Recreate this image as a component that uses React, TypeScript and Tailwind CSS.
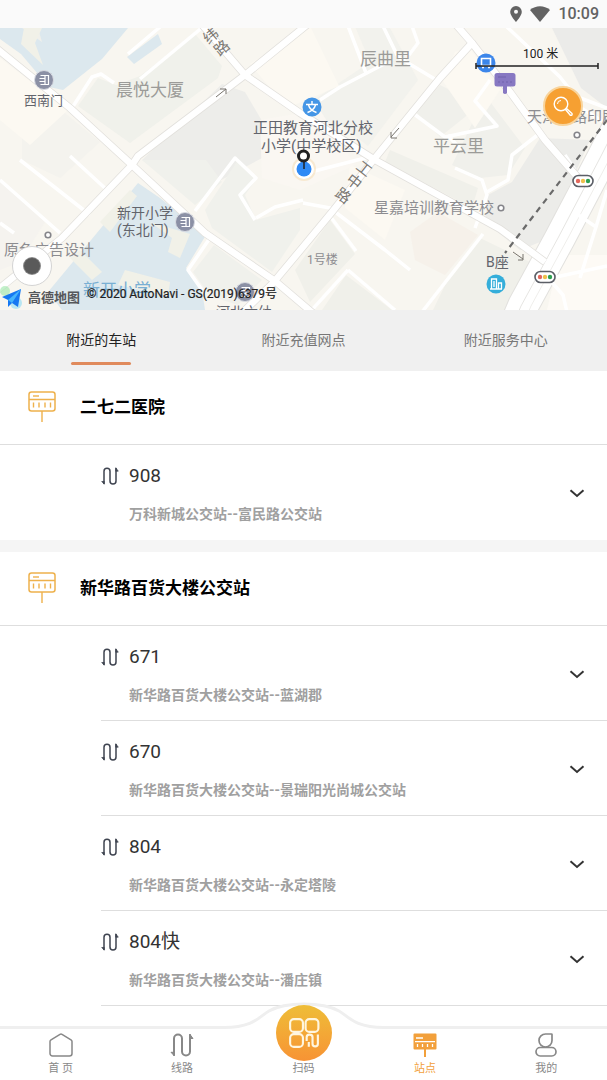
import { useState } from 'react';
import { clsx } from 'clsx';

interface Route {
  name: string;
  direction: string;
}

interface Station {
  name: string;
  routes: Route[];
}

const TABS = ['附近的车站', '附近充值网点', '附近服务中心'];

const STATIONS: Station[] = [
  {
    name: '二七二医院',
    routes: [{ name: '908', direction: '万科新城公交站--富民路公交站' }],
  },
  {
    name: '新华路百货大楼公交站',
    routes: [
      { name: '671', direction: '新华路百货大楼公交站--蓝湖郡' },
      { name: '670', direction: '新华路百货大楼公交站--景瑞阳光尚城公交站' },
      { name: '804', direction: '新华路百货大楼公交站--永定塔陵' },
      { name: '804快', direction: '新华路百货大楼公交站--潘庄镇' },
    ],
  },
];

/** Outlined bus stop sign in front of each station name. */
function SignIcon() {
  return (
    <svg viewBox="0 0 28 32" className="h-8 w-7" fill="none" stroke="#eeb14c" aria-hidden="true">
      <rect x="1" y="1" width="26" height="19" rx="2.5" strokeWidth="1.5" />
      <path d="M1 8.5h26M14 20v11" strokeWidth="1.4" />
      <path d="M5 5h6" strokeWidth="1.4" />
      <path d="M5.5 11.5v5M11 11.5v5M17 11.5v5M22.5 11.5v5" strokeWidth="1.4" />
    </svg>
  );
}

function RouteIcon({ className }: { className?: string }) {
  return (
    <svg
      viewBox="0 0 24 24"
      className={clsx('shrink-0', className)}
      fill="none"
      stroke="currentColor"
      strokeLinecap="round"
      strokeLinejoin="round"
      aria-hidden="true"
    >
      <path d="M4 22V5.5a4 4 0 0 1 8 0v13a4 4 0 0 0 8 0V2" strokeWidth="2" />
      <path d="M4 22.5 1 19.3h3zM20 1.5l3 4h-3z" fill="currentColor" strokeWidth="1" />
    </svg>
  );
}

function ChevronIcon() {
  return (
    <svg viewBox="0 0 16 10" className="h-[10px] w-4" fill="none" aria-hidden="true">
      <path d="m1.5 1.3 6.5 5.6 6.5-5.6" stroke="#333" strokeWidth="2" />
    </svg>
  );
}

function StatusBar() {
  return (
    <header className="flex h-7 shrink-0 items-center justify-end bg-[#fafafa] pr-2 text-[#636363]">
      <svg viewBox="0 0 12 16" className="mr-2 h-4 w-3" fill="currentColor" aria-hidden="true">
        <path
          fillRule="evenodd"
          d="M6 0a5.8 5.8 0 0 0-5.8 5.8C.2 10 6 16 6 16s5.8-6 5.8-10.2A5.8 5.8 0 0 0 6 0Zm0 3.8a2 2 0 1 1 0 4 2 2 0 0 1 0-4Z"
        />
      </svg>
      <svg viewBox="0 0 20 16" className="mr-2 h-4 w-5" fill="currentColor" aria-hidden="true">
        <path d="M0 4C6-1 14-1 20 4L10 16Z" />
      </svg>
      <span className="text-base leading-7 font-medium">10:09</span>
    </header>
  );
}

/** Entrance marker shared by the gates on the map. */
function GateMarker({ x, y }: { x: number; y: number }) {
  return (
    <g transform={`translate(${x} ${y})`}>
      <circle r="9.5" fill="#8b90a5" stroke="#d9dbe2" />
      <path d="M-3.5-4.5h8v9h-8M-4.5-1.5h5M-4.5 1.5h5M1-4v8" fill="none" stroke="#fff" strokeWidth="1.2" />
    </g>
  );
}

function TrafficLight({ x, y }: { x: number; y: number }) {
  return (
    <g transform={`translate(${x} ${y})`}>
      <rect x="-10" y="-5.5" width="20" height="11" rx="5.5" fill="#fff" stroke="#5b5e66" strokeWidth="1.6" />
      <circle cx="-5" r="2.2" fill="#e2685c" />
      <circle r="2.2" fill="#eec04c" />
      <circle cx="5" r="2.2" fill="#2f9f51" />
    </g>
  );
}

const MAIN_ROADS = [
  'M-5 47 70 108 132 165 205 233 275 281 315 315',
  'M308 24 245 75 138 156 132 165 62 238-5 292',
  'M198 20 245 75 300 113 375 160 500 229 545 262',
  'M452 20 472 43 440 78 375 158 332 212 303 247 273 283 240 315',
  'M472 43 510 92 545 140 580 180',
];

const MINOR_ROADS = [
  'M204 26 140 79M72 108 92 77 101 74 114 83',
  'M128 54 160 27M348 26 366 73M383 26 398 57 438 81',
  'M412 26 418 43 409 55M320 100 340 87 388 62M414 114 445 137 497 126 475 101 490 80',
  'M448 135 462 151M195 211 235 158 256 178 240 195 255 220',
  'M256 218 275 207 303 200',
  'M212 235 188 270 202 290M303 174 365 158 380 155M303 203 330 208 385 250 410 270',
  'M330 216 356 251M348 270 310 312M348 270 395 310M483 234 422 312',
  'M475 228 487 195 482 180 455 168M487 192 508 180 512 155 540 133M506 26 560 77 575 96 607 108',
  'M555 92 607 124M565 155 575 170M556 277 607 266M577 214 596 227 607 190M596 227 580 278',
  'M0 223 14 233M20 160 90 215M70 156 107 190M0 180 60 233',
  'M550 280 563 295 567 312',
];

function MapView() {
  return (
    <section className="relative h-[282px] shrink-0 overflow-hidden" aria-label="地图">
      <svg
        viewBox="0 28 607 282"
        preserveAspectRatio="xMidYMid slice"
        className="block h-full w-full"
        fill="none"
      >
        <rect x="0" y="28" width="607" height="282" fill="#f8f6f0" />

        {/* building blocks */}
        <g fill="#f0f0eb">
          <path d="M0 28h62L44 58 25 48 0 38Z" />
          <path d="M195 34 222 66 218 78 130 143 78 106 98 78 116 85 140 76Z" fill="#f0f1eb" />
          <path d="M222 84 245 92 272 138 262 158 225 178 192 195 142 160Z" fill="#ededea" />
          <path d="M315 28h75l28 52-50 66-28-22-14 10-18-30 62-42-16-38Z" fill="#f2f2ed" />
          <path d="M440 85 480 105 440 137 416 112ZM485 95 525 148 508 175 480 178 452 165 468 132Z" />
          <path d="M552 28h55v80l-26-20Z" fill="#ebebe9" />
          <path d="M488 195 512 182 540 138 590 140 545 240 520 250 485 222Z" fill="#ecece9" />
          <path d="M390 150 478 188 472 208 385 162Z" fill="#f0f0ea" />
          <path d="M142 160 195 205 222 182 206 160ZM238 160 257 178 245 195 256 220 300 208 300 230 272 272 212 228 205 210Z" fill="#f0f1ec" />
          <path d="M193 272 214 245 262 280 238 305 210 296Z" fill="#f0f1ec" />
          <path d="M22 125 55 105 100 142 60 178 22 160Z" fill="#f4f3ee" />
          <path d="M330 220 355 254 310 302 295 270ZM346 275 392 310h-70ZM450 275 480 238 530 262 505 310h-72Z" fill="#f0f0ea" />
          <path d="M410 232 438 212 478 235 445 275 415 260Z" fill="#f6f1ea" />
          <path d="M0 180 45 222 20 262 0 270Z" fill="#f5f3ef" />
        </g>
        <g fill="#fcf9f2">
          <path d="M0 58 68 110 30 145 0 120ZM250 64 303 28h8l28 58-52 22Z" />
          <path d="M350 165 405 190 385 240 345 208ZM455 52 470 48 500 90 475 128 442 80Z" />
          <path d="M260 120 320 110 355 165 300 190 262 178Z" fill="#faf7f2" />
          <path d="M560 255h47v55h-60Z" fill="#fdfaf5" />
        </g>

        {/* water and school grounds */}
        <g fill="#dce8ee">
          <path d="M38 28h90l-26 31-39 31-14-3-28-33-21-15V28h22l20 14Z" />
          <path d="M127 57 158 34 162 44 134 64Z" />
          <path d="M138 183 160 198 206 235 186 268 202 290 205 310H62L48 292 106 222Z" />
        </g>
        <g fill="#f1f1e8">
          <path d="M24 28h18l-7 15 8 22-22-21Z" />
          <path d="M100 222 130 190 137 196 110 232ZM70 258 80 250 102 272 92 280ZM150 222 190 234 180 258 168 252 172 238ZM125 270 170 282 168 296 118 285Z" />
        </g>

        {/* expressway */}
        <g strokeLinejoin="round">
          <path d="M634 95 602 158 560 238 523 306 515 325" stroke="#e2e1de" strokeWidth="32" />
          <path d="M634 95 602 158 560 238 523 306 515 325" stroke="#fff" strokeWidth="30" />
          <path d="M632 95 600 158 558 238 521 306 513 325" stroke="#e6e5e2" />
          <path d="M642 95 610 158 568 238 531 306 523 325" stroke="#efeeeb" />
        </g>

        <g strokeLinejoin="round">
          {MINOR_ROADS.map((d) => (
            <path key={d} d={d} stroke="#fff" strokeWidth="3.5" />
          ))}
          {MAIN_ROADS.map((d) => (
            <path key={d} d={d} stroke="#e2e0dc" strokeWidth="8" />
          ))}
          {MAIN_ROADS.map((d) => (
            <path key={d} d={d} stroke="#fff" strokeWidth="6.5" />
          ))}
        </g>
        <path d="M607 120 505 253" stroke="#6a6a6a" strokeWidth="2.2" strokeDasharray="6 5" />

        {/* one-way arrows */}
        <g stroke="#77736c" strokeWidth="1">
          <path d="M216 97 226 89M220 89h6v5M399 128 391 137M391 132v6h6M513 252 523 259M518 260h5v-6" />
        </g>

        {/* place names */}
        <g fontSize="17" fill="#9b9b98">
          <text x="116" y="96">晨悦大厦</text>
          <text x="360" y="65">辰曲里</text>
          <text x="433" y="152">平云里</text>
        </g>
        <g fontSize="15" fill="#8c8c90">
          <text x="374" y="213">星嘉培训教育学校</text>
          <text x="527" y="122">天津铁路印刷</text>
          <text x="4" y="255">原色广告设计</text>
          <text x="307" y="264" fontSize="12">1号楼</text>
        </g>
        <g fontSize="14" fill="#62646c">
          <text x="24" y="105" fontSize="13">西南门</text>
          <text x="253" y="133" fontSize="15">正田教育河北分校</text>
          <text x="261" y="151" fontSize="15">小学(中学校区)</text>
          <text x="117" y="218">新开小学</text>
          <text x="117" y="235">(东北门)</text>
          <text x="486" y="267">B座</text>
          <text x="216" y="317">河北六幼</text>
        </g>
        <text x="83" y="296" fontSize="17" fill="#79afd3">新开小学</text>
        <g fontSize="15" fill="#7b7873" textAnchor="middle">
          <text transform="translate(211 36) rotate(-40)" y="5">纬</text>
          <text transform="translate(222 48) rotate(-40)" y="5">路</text>
          <text transform="translate(364 169) rotate(38)" y="5">工</text>
          <text transform="translate(354 182) rotate(38)" y="5">中</text>
          <text transform="translate(343 196) rotate(38)" y="5">路</text>
        </g>

        {/* markers */}
        <GateMarker x={44} y={80} />
        <GateMarker x={185} y={222} />
        <GateMarker x={245} y={292} />
        <TrafficLight x={583} y={181} />
        <TrafficLight x={545} y={277} />
        <g fill="#fff" stroke="#85858a" strokeWidth="1.6">
          <circle cx="48" cy="235" r="2.8" />
          <circle cx="501" cy="208" r="2.8" />
          <circle cx="577" cy="135" r="2.8" />
        </g>
        <circle cx="312" cy="107" r="9.5" fill="#4596e6" />
        <path
          d="M312 101v3M306 104.5h12M308.5 105c1 4 4 6 8 7.5M315.5 105c-1 4-4 6-8 7.5"
          stroke="#fff"
          strokeWidth="1.4"
        />
        <circle cx="496" cy="284" r="9.5" fill="#35aeda" />
        <path
          d="M491.5 289v-10h5v10M490 289h12M498.5 289v-6h3v6M494 281v6"
          stroke="#fff"
          strokeWidth="1.3"
        />
        <circle cx="486" cy="63" r="9.5" fill="#3c86ea" />
        <path d="M481.5 58.5h9v7h-9zM482 67.5h2M488 67.5h2" stroke="#fff" strokeWidth="1.6" />
        <path
          d="M497 73h16a2.5 2.5 0 0 1 2.5 2.5V84a2.5 2.5 0 0 1-2.5 2.5h-6v6.5q-2 2-4 0v-6.5h-6a2.5 2.5 0 0 1-2.5-2.5v-8.5A2.5 2.5 0 0 1 497 73Z"
          fill="#8778c2"
        />
        <path d="M498 77h8M498 82h2M502 82h2M506 82h2M510 82h2" stroke="#7162ad" />

        {/* current position */}
        <circle cx="304" cy="169" r="12" fill="#f5dfba" opacity="0.6" />
        <circle cx="304" cy="169" r="10" fill="#fff" />
        <circle cx="304" cy="169" r="7.5" fill="#2f8af5" />
        <path d="M304 161v8" stroke="#222" strokeWidth="1.5" />
        <circle cx="303.5" cy="156" r="5" fill="#fff" stroke="#202020" strokeWidth="3" />

        {/* scale */}
        <text x="523" y="58" fontSize="12" fill="#222">100 米</text>
        <path d="M476 66h122M476 63v6M598 63v6" stroke="#222" strokeWidth="1.5" />

        {/* provider */}
        <circle cx="5" cy="291" r="5" fill="#9be8a8" opacity="0.6" />
        <circle cx="16" cy="303" r="6" fill="#8edcf5" opacity="0.6" />
        <path d="m2 297 19-8-3 18-6-4-4 4v-7Z" fill="#1678f2" />
        <path d="m8 300 13-11-9 14Z" fill="#45b4fb" />
        <text x="28" y="302" fontSize="13" fontWeight="700" fill="#55575a">高德地图</text>
        <text x="87" y="298" fontSize="12" fill="#202020" stroke="#202020" strokeWidth="0.2">
          © 2020 AutoNavi - GS(2019)6379号
        </text>
      </svg>

      <button
        type="button"
        aria-label="搜索"
        className="absolute top-[58px] right-6 flex size-10 items-center justify-center rounded-full border-2 border-[#f8d49c] bg-[#f6a032]"
      >
        <svg viewBox="0 0 20 20" className="size-5" fill="none" stroke="#fff" aria-hidden="true">
          <circle cx="8" cy="8" r="6.8" strokeWidth="1.4" />
          <path d="M4.5 8A3.5 3.5 0 0 1 8 4.5" />
          <path d="m12.5 13.5 1-1 5.5 5q.5 2-1.500 2Z" strokeWidth="1.4" strokeLinejoin="round" />
        </svg>
      </button>
      <button
        type="button"
        aria-label="定位"
        className="absolute bottom-6 left-3 flex size-10 items-center justify-center rounded-full border border-[#d4d4d4] bg-white"
      >
        <span className="size-4 rounded-full bg-[#5a5a5a] ring-1 ring-[#8a8a8a]" />
      </button>
    </section>
  );
}

function StationTabs({ active, onSelect }: { active: number; onSelect: (i: number) => void }) {
  return (
    <div role="tablist" className="grid h-[61px] shrink-0 grid-cols-3 bg-[#f0f0f0]">
      {TABS.map((tab, i) => (
        <button
          key={tab}
          type="button"
          role="tab"
          aria-selected={i === active}
          onClick={() => onSelect(i)}
          className={clsx(
            'flex flex-col items-center pt-5 text-sm leading-5',
            i === active ? 'text-[#222]' : 'text-[#777]'
          )}
        >
          {tab}
          {i === active && <span className="mt-3 h-[3px] w-[60px] rounded-full bg-[#e08a5c]" />}
        </button>
      ))}
    </div>
  );
}

function RouteRow({ route, last }: { route: Route; last: boolean }) {
  return (
    <li
      className={clsx(
        'ml-[101px] flex h-[95px] items-center border-b pt-1 pr-[22px]',
        last ? 'border-transparent' : 'border-[#dedede]'
      )}
    >
      <div className="min-w-0 flex-1">
        <div className="flex items-center gap-[10px]">
          <RouteIcon className="size-[18px] text-[#3f4450]" />
          <span className="text-[19px] leading-6 text-[#333]">{route.name}</span>
        </div>
        <p className="mt-4 truncate pl-7 text-sm leading-5 font-bold text-[#a0a0a0]">{route.direction}</p>
      </div>
      <button type="button" aria-label={`展开 ${route.name}`}>
        <ChevronIcon />
      </button>
    </li>
  );
}

function StationCard({ station, closed }: { station: Station; closed: boolean }) {
  return (
    <section className="bg-white">
      <div className="flex h-[74px] items-center gap-6 border-b border-[#dedede] pb-0.5 pl-7">
        <SignIcon />
        <h2 className="text-[17px] leading-6 font-bold text-black">{station.name}</h2>
      </div>
      <ul>
        {station.routes.map((route, i) => (
          <RouteRow
            key={route.name}
            route={route}
            last={closed && i === station.routes.length - 1}
          />
        ))}
      </ul>
    </section>
  );
}

const NAV_LINK = 'flex flex-1 flex-col items-center pt-1 text-[11px] leading-6';
const NAV_ICON = 'size-6 shrink-0';

function BottomNav() {
  return (
    <nav className="relative flex h-[54px] shrink-0 border-t-3 border-[#efefef] bg-white text-[#888]">
      <svg
        viewBox="0 0 160 28"
        className="absolute -top-[27px] left-1/2 h-7 w-40 -translate-x-1/2"
        fill="none"
        aria-hidden="true"
      >
        <path d="M0 25.5C30 25.5 36 14 45 9S66 2 80 2s26 2 35 7 15 16.5 45 16.5V28H0Z" fill="#fff" />
        <path
          d="M0 25.5C30 25.5 36 14 45 9S66 2 80 2s26 2 35 7 15 16.5 45 16.5"
          stroke="#efefef"
          strokeWidth="3"
        />
      </svg>
      <a href="#home" className={NAV_LINK}>
        <svg viewBox="0 0 24 24" className={NAV_ICON} fill="none" stroke="currentColor" strokeWidth="1.5" aria-hidden="true">
          <path d="M1 8.5q0-1 1-1.600l9-5.500q1-.6 2 0l9 5.500q1 .6 1 1.600V20.500a2.500 2.500 0 0 1-2.500 2.500h-17A2.500 2.500 0 0 1 1 20.500Z" />
        </svg>
        首 页
      </a>
      <a href="#lines" className={NAV_LINK}>
        <RouteIcon className="size-6" />
        线路
      </a>
      <a href="#scan" className="relative flex flex-1 flex-col items-center pt-7 text-[11px] leading-6">
        <span className="absolute -top-6 flex size-14 items-center justify-center rounded-full bg-linear-to-b from-[#eebd38] to-[#f79334]">
          <svg
            viewBox="0 0 30 30"
            className="size-8"
            fill="none"
            stroke="#fff6df"
            strokeWidth="2"
            strokeLinejoin="round"
            aria-hidden="true"
          >
            <rect x="2" y="2" width="12" height="12" rx="3.5" />
            <rect x="16.5" y="2" width="12" height="12" rx="3.5" />
            <rect x="2" y="16" width="12" height="12" rx="3.5" />
            <path
              d="M17.5 22.5V19q0-2.500 2.500-2.500h.5q2.500 0 2.500 2.500v6q0 2.500 2.500 2.500t2.500-2.500v-8.500M19.500 23.500V28"
              strokeWidth="2"
            />
          </svg>
        </span>
        扫码
      </a>
      <a href="#stations" aria-current="page" className={clsx(NAV_LINK, 'text-[#f2a03b]')}>
        <svg viewBox="0 0 24 24" className={NAV_ICON} aria-hidden="true">
          <path
            d="M1.5.5h21q1 0 1 1v14q0 1-1 1h-21q-1 0-1-1v-14q0-1 1-1ZM11 16h2v8h-2Z"
            fill="currentColor"
          />
          <path
            d="M3 5h7M2 8.7h20M4.5 11v3M9.5 11v3M14.5 11v3M19.5 11v3"
            stroke="#fff"
            strokeWidth="1.3"
          />
        </svg>
        站点
      </a>
      <a href="#me" className={NAV_LINK}>
        <svg viewBox="0 0 24 24" className={NAV_ICON} fill="none" stroke="currentColor" strokeWidth="1.7" aria-hidden="true">
          <path d="M17.5 1H11.5a6.5 6.5 0 1 0 6.5 6.5V1.5q0-.5-.5-.5Z" />
          <rect x="2" y="14.5" width="20" height="8.5" rx="4.2" />
        </svg>
        我的
      </a>
    </nav>
  );
}

export default function App() {
  const [tab, setTab] = useState(0);

  return (
    <div className="flex h-screen flex-col bg-[#f5f5f5] font-['Roboto','Noto_Sans_CJK_SC',sans-serif]">
      <StatusBar />
      <MapView />
      <StationTabs active={tab} onSelect={setTab} />
      <main className="flex min-h-0 flex-1 flex-col gap-3 overflow-y-auto [scrollbar-width:none]">
        {STATIONS.map((station, i) => (
          <StationCard key={station.name} station={station} closed={i < STATIONS.length - 1} />
        ))}
        <div className="-mt-3 min-h-5 flex-1 bg-white" />
      </main>
      <BottomNav />
    </div>
  );
}
